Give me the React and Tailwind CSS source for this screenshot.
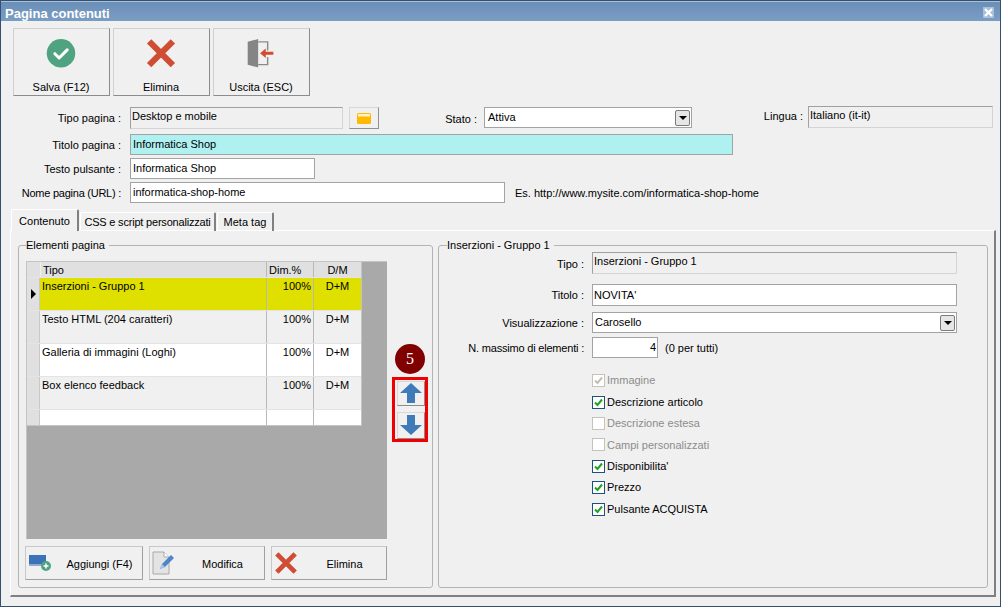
function CheckIcon() {
  return (
    <svg width="30" height="30" viewBox="0 0 30 30">
      <circle cx="15" cy="15" r="15" fill="#4fa380" />
      <path d="M8.5 15.5l4.5 4.5 8.5-8.5" fill="none" stroke="#fff" strokeWidth="3.2" strokeLinecap="round" strokeLinejoin="round" />
    </svg>
  )
}

function CrossIcon({ size = 30 }) {
  return (
    <svg width={size} height={size} viewBox="0 0 30 30">
      <path d="M2.500 2.500l25 25M27.500 2.500l-25 25" fill="none" stroke="#cf4d33" strokeWidth="6.500" />
    </svg>
  )
}

function ExitIcon() {
  return (
    <svg width="30" height="30" viewBox="0 0 30 30">
      <path d="M12 3h10v9M22 19v8H12" fill="none" stroke="#8a8a8a" strokeWidth="1.500" />
      <path d="M1 3l11-3v30l-11-3z" fill="#858585" />
      <path d="M14 15l6-5v3.400h8v3.200h-8V20z" fill="#d24a30" />
    </svg>
  )
}

function FolderIcon() {
  return (
    <svg width="16" height="13" viewBox="0 0 16 13">
      <path d="M1 2.500q0-1.500 1.500-1.500h11q1.500 0 1.500 1.500v8q0 1.500-1.500 1.500h-11q-1.500 0-1.500-1.500z" fill="#ffb900" />
      <path d="M2 3q0-1 1-1h10q1 0 1 1v1.500H2z" fill="#fff3c8" />
    </svg>
  )
}

function ArrowIcon({ down }) {
  return (
    <svg width="22" height="20" viewBox="0 0 22 20">
      <path d={down ? 'M7 0h8v10h7L11 20 0 10h7z' : 'M7 20h8V10h7L11 0 0 10h7z'} fill="#3f7ab9" />
    </svg>
  )
}

function AddIcon() {
  return (
    <svg width="24" height="22" viewBox="0 0 24 22">
      <rect x="1" y="3" width="17" height="9" fill="#3b72b8" />
      <rect x="1" y="12" width="17" height="2" fill="#8fa9c9" />
      <circle cx="18" cy="14" r="5" fill="#4fa380" />
      <path d="M15.500 14h5M18 11.500v5" stroke="#fff" strokeWidth="1.500" />
    </svg>
  )
}

function EditIcon() {
  return (
    <svg width="24" height="26" viewBox="0 0 24 26">
      <path d="M1 2h11l5 5v17H1z" fill="#e4e4e4" stroke="#a8a8a8" />
      <path d="M12 2v5h5" fill="#fff" stroke="#a8a8a8" />
      <path d="M8 19l2-5 9-9 3 3-9 9z" fill="#4a86c8" />
      <path d="M8 19l2-5 3 3z" fill="#a9c7e6" />
    </svg>
  )
}

function ToolButton({ icon, label }) {
  return (
    <button className="flex h-[68px] w-[97px] flex-col items-center border border-t-[#d0d0d0] border-l-[#d0d0d0] border-r-[#8c8c8c] border-b-[#8c8c8c] pt-[10px] pr-px">
      {icon}
      <span className="mt-[11px]">{label}</span>
    </button>
  )
}

function Label({ className, children }) {
  return <div className={`shrink-0 text-right ${className}`}>{children}</div>
}

function ReadOnly({ className, children }) {
  return (
    <div className={`border border-t-[#a0a0a0] border-l-[#a0a0a0] border-r-[#d4d4d4] border-b-[#d4d4d4] pt-px pl-px leading-[15px] ${className}`}>
      {children}
    </div>
  )
}

function TextBox({ className, children }) {
  return (
    <div className={`flex items-center border border-[#a3a3a3] pl-[1px] ${className}`}>{children}</div>
  )
}

function ComboArrow() {
  return (
    <span className="ml-auto mr-px flex h-[16px] w-[15px] items-center justify-center rounded-[2px] border border-[#7a7a7a] bg-[#e6e6e6]">
      <span className="border-x-[4px] border-t-[4px] border-x-transparent border-t-black" />
    </span>
  )
}

function Tab({ active, className, children }) {
  return (
    <div
      className={
        active
          ? `flex h-[22px] items-center justify-center rounded-t-[2px] border-t border-l border-t-[#fff] border-l-[#fff] border-r-2 border-r-[#808080] bg-[#f0f0f0] pt-px whitespace-nowrap ${className}`
          : `mt-[3px] flex h-[19px] items-center justify-center rounded-t-[2px] border-t border-l border-t-[#fff] border-l-[#fff] border-r-2 border-r-[#808080] pt-px whitespace-nowrap ${className}`
      }
    >
      {children}
    </div>
  )
}

const rows = [
  { tipo: 'Inserzioni - Gruppo 1', bg: 'bg-[#e0e000]', h: 'h-[33px]', current: true },
  { tipo: 'Testo HTML (204 caratteri)', bg: 'bg-[#f0f0f0]', h: 'h-[33px]' },
  { tipo: 'Galleria di immagini (Loghi)', bg: 'bg-white', h: 'h-[33px]' },
  { tipo: 'Box elenco feedback', bg: 'bg-[#f0f0f0]', h: 'h-[33px]' },
]

function PageGrid() {
  return (
    <div className="h-[278px] w-[361px] border-t border-l border-[#c4c4c4] bg-[#a9a9a9]">
      <div className="w-[335px] border-r border-b border-[#c4c4c4]">
        <div className="flex h-[15px] bg-[#e0e0e0] leading-[17px]">
          <div className="w-[14px] border-r border-[#f0f0f0]" />
          <div className="w-[226px] border-r border-[#b8b8b8] pl-[2px]">Tipo</div>
          <div className="w-[47px] border-r border-[#b8b8b8] pl-[2px]">Dim.%</div>
          <div className="flex-1 text-center">D/M</div>
        </div>
        {rows.map((r) => (
          <div key={r.tipo} className={`flex border-t border-[#e4e4e4] ${r.h} ${r.bg}`}>
            <div className="flex w-[13px] items-center justify-center border-r border-[#c8c8c8] bg-[#e0e0e0]">
              {r.current && <span className="border-y-[5px] border-l-[5px] border-y-transparent border-l-black" />}
            </div>
            <div className="w-[227px] border-r border-[#b8b8b8] pl-[2px] leading-[17px]">{r.tipo}</div>
            <div className="w-[47px] border-r border-[#b8b8b8] pr-[2px] text-right leading-[17px]">100%</div>
            <div className="flex-1 text-center leading-[17px]">D+M</div>
          </div>
        ))}
        <div className="flex h-[16px] border-t border-[#e4e4e4] bg-white">
          <div className="w-[13px] border-r border-[#c8c8c8] bg-[#e0e0e0]" />
          <div className="w-[227px] border-r border-[#b8b8b8]" />
          <div className="w-[47px] border-r border-[#b8b8b8]" />
        </div>
      </div>
    </div>
  )
}

function MoveButton({ down, className }) {
  return (
    <button className={`flex w-[28px] items-center justify-center border border-t-[#d8d8d8] border-l-[#d8d8d8] border-r-[#8c8c8c] border-b-[#8c8c8c] ${className}`}>
      <ArrowIcon down={down} />
    </button>
  )
}

function GridButton({ icon, label, className }) {
  return (
    <button className={`flex h-[34px] items-center border border-t-[#c8c8c8] border-l-[#c8c8c8] border-r-[#a0a0a0] border-b-[#a0a0a0] pl-[2px] ${className}`}>
      <span className="flex w-[24px] items-center justify-center">{icon}</span>
      <span className="flex-1 pt-[3px] pl-[5px] text-center">{label}</span>
    </button>
  )
}

function Check({ checked, disabled, label }) {
  return (
    <div className="flex h-[21.4px] items-center pl-[153px]">
      <span className={`flex h-[13px] w-[13px] items-center justify-center border bg-white ${disabled ? 'border-[#c4c4bc]' : 'border-[#1c5180]'}`}>
        {checked && (
          <svg width="9" height="9" viewBox="0 0 9 9">
            <path d="M1 4.500l2.500 2.500L8 1.500" fill="none" stroke={disabled ? '#c0c0b8' : '#21a121'} strokeWidth="2" />
          </svg>
        )}
      </span>
      <span className={`ml-[2px] ${disabled ? 'text-[#8c8c8c]' : ''}`}>{label}</span>
    </div>
  )
}

export default function App() {
  return (
    <div className="flex h-[607px] w-[1001px] flex-col border border-[#34506e] bg-[#f0f0f0] font-['Liberation_Sans',sans-serif] text-[11px] text-black">
      <div className="flex h-[20px] shrink-0 items-center justify-between border-t border-[#a9c0d8] bg-linear-to-b from-[#6a8fb8] to-[#7a9dc3] pt-[3px] pr-[6px] pl-[4px]">
        <span className="mt-px block text-[13px] font-bold text-white">Pagina contenuti</span>
        <span className="-mt-[2px] flex h-[11px] w-[11px] items-center justify-center bg-[#a8c0da]">
          <svg width="9" height="9" viewBox="0 0 9 9">
            <path d="M1 1l7 7M8 1L1 8" stroke="#fff" strokeWidth="2.200" />
          </svg>
        </span>
      </div>

      <div className="mt-[7px] flex gap-[3px] pl-[12px]">
        <ToolButton icon={<CheckIcon />} label="Salva (F12)" />
        <ToolButton icon={<CrossIcon />} label="Elimina" />
        <ToolButton icon={<ExitIcon />} label="Uscita (ESC)" />
      </div>

      <div className="mt-[11px] flex h-[22px]">
        <Label className="w-[120px] pt-[3px]">Tipo pagina :</Label>
        <ReadOnly className="ml-[9px] w-[213px]">Desktop e mobile</ReadOnly>
        <button className="ml-[6px] flex w-[30px] items-center justify-center border border-t-[#d8d8d8] border-l-[#d8d8d8] border-r-[#909090] border-b-[#909090]">
          <FolderIcon />
        </button>
        <Label className="w-[98px] pt-[4px]">Stato :</Label>
        <TextBox className="ml-[7px] h-[21px] w-[208px] bg-white pl-[3px]">
          Attiva
          <ComboArrow />
        </TextBox>
        <Label className="w-[111px] pt-[1px]">Lingua :</Label>
        <ReadOnly className="ml-[5px] -mt-px h-[22px] w-[185px]">Italiano (it-it)</ReadOnly>
      </div>

      <div className="mt-[5px] flex h-[21px]">
        <Label className="w-[120px] pt-[3px]">Titolo pagina :</Label>
        <TextBox className="ml-[9px] w-[603px] bg-[#aff0f0] pl-[2px]">Informatica Shop</TextBox>
      </div>

      <div className="mt-[3px] flex h-[21px]">
        <Label className="w-[120px] pt-[3px]">Testo pulsante :</Label>
        <TextBox className="ml-[9px] w-[185px] bg-white pl-[2px]">Informatica Shop</TextBox>
      </div>

      <div className="mt-[3px] flex h-[21px]">
        <Label className="w-[120px] pt-[3px] tracking-[-0.25px]">Nome pagina (URL) :</Label>
        <TextBox className="ml-[9px] w-[375px] bg-white pl-[2px]">informatica-shop-home</TextBox>
        <span className="ml-[10px] pt-[3px]">Es. http://www.mysite.com/informatica-shop-home</span>
      </div>

      <div className="relative z-10 mt-[6px] flex h-[22px] items-start gap-px pl-[10px]">
        <Tab active className="w-[68px]">Contenuto</Tab>
        <Tab className="w-[136px] tracking-[-0.2px]">CSS e script personalizzati</Tab>
        <Tab className="w-[57px]">Meta tag</Tab>
      </div>

      <div className="-mt-px ml-[9px] flex h-[367px] w-[986px] gap-[5px] border border-t-[#fff] border-l-[#fff] border-r-2 border-b-2 border-r-[#808080] border-b-[#808080] pt-[7px] pl-[7px]">
        <fieldset className="h-[350px] w-[415px] rounded-[3px] border border-[#b4b4b4] pr-[4px] pl-[7px]">
          <legend className="h-[14px] pr-[4px] leading-[14px]">Elementi pagina</legend>
          <div className="mt-[9px] flex">
            <PageGrid />
            <div className="ml-[5px] flex flex-col">
              <div className="mt-[83px] ml-[3px] flex h-[30px] w-[30px] items-center justify-center rounded-full bg-[#800000] font-['Liberation_Serif',serif] text-[16px] text-white">
                5
              </div>
              <div className="mt-[3px] flex h-[65px] w-[36px] flex-col gap-[6px] border-[3px] border-[#f00000] pt-px pl-[2px]">
                <MoveButton className="h-[25px]" />
                <MoveButton down className="h-[28px]" />
              </div>
            </div>
          </div>
          <div className="mt-[7px] -ml-px flex h-[34px] gap-[6px]">
            <GridButton className="w-[118px]" icon={<AddIcon />} label="Aggiungi (F4)" />
            <GridButton className="w-[116px]" icon={<EditIcon />} label="Modifica" />
            <GridButton className="w-[116px]" icon={<CrossIcon size={22} />} label="Elimina" />
          </div>
        </fieldset>

        <fieldset className="h-[350px] w-[550px] rounded-[3px] border border-[#b4b4b4]">
          <legend className="ml-[8px] h-[14px] pr-[4px] leading-[14px]">Inserzioni - Gruppo 1</legend>
          <div className="flex h-[22px]">
            <Label className="w-[145px] pt-[4px]">Tipo :</Label>
            <ReadOnly className="ml-[8px] w-[365px]">Inserzioni - Gruppo 1</ReadOnly>
          </div>
          <div className="mt-[10px] flex h-[22px]">
            <Label className="w-[145px] pt-[3px]">Titolo :</Label>
            <TextBox className="ml-[8px] w-[365px] bg-white">NOVITA'</TextBox>
          </div>
          <div className="mt-[6px] flex h-[21px]">
            <Label className="w-[145px] pt-[3px]">Visualizzazione :</Label>
            <TextBox className="ml-[8px] w-[365px] bg-white pl-[2px]">
              Carosello
              <ComboArrow />
            </TextBox>
          </div>
          <div className="mt-[4px] flex h-[21px]">
            <Label className="w-[145px] pt-[3px] tracking-[-0.2px]">N. massimo di elementi :</Label>
            <TextBox className="ml-[8px] w-[66px] justify-end bg-white pr-[1px]">4</TextBox>
            <span className="ml-[7px] pt-[3px]">(0 per tutti)</span>
          </div>
          <div className="mt-[12px]">
            <Check checked disabled label="Immagine" />
            <Check checked label="Descrizione articolo" />
            <Check disabled label="Descrizione estesa" />
            <Check disabled label="Campi personalizzati" />
            <Check checked label="Disponibilita'" />
            <Check checked label="Prezzo" />
            <Check checked label="Pulsante ACQUISTA" />
          </div>
        </fieldset>
      </div>
    </div>
  )
}
